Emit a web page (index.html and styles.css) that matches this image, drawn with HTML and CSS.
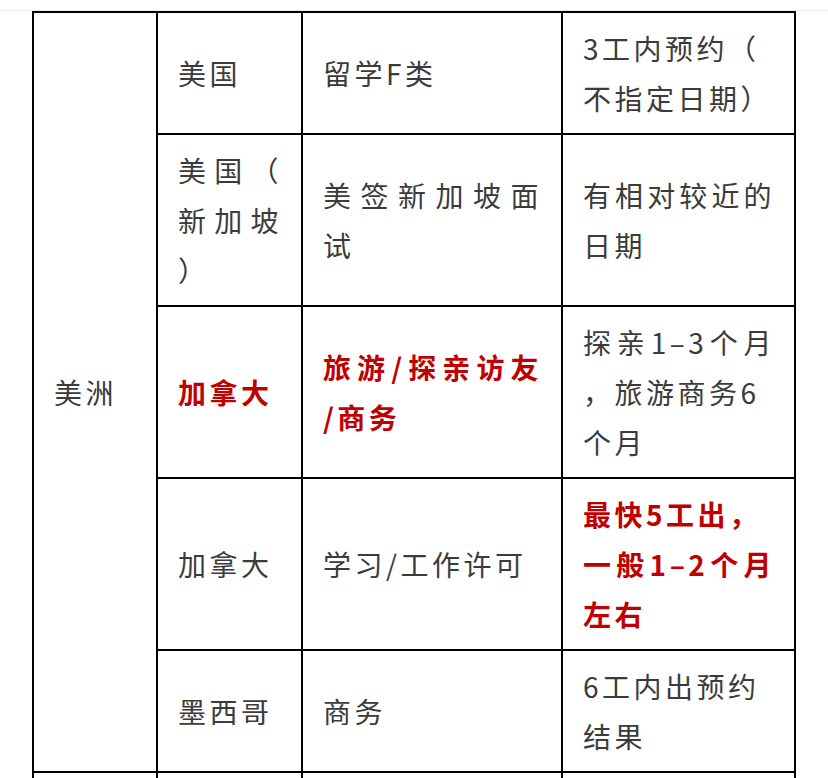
FILE: index.html
```html
<!DOCTYPE html>
<html lang="zh-CN">
<head>
<meta charset="utf-8">
<title>签证预约</title>
<link rel="stylesheet" href="styles.css">
</head>
<body>
<div class="page">
  <div class="rule"></div>
  <table class="visa">
    <colgroup>
      <col class="c1"><col class="c2"><col class="c3"><col class="c4">
    </colgroup>
    <tr class="r2">
      <td rowspan="5">美洲</td>
      <td>美国</td>
      <td>留学F类</td>
      <td><span class="ln">3工内预约（</span><span class="ln">不指定日期）</span></td>
    </tr>
    <tr class="r3">
      <td><span class="ln j">美国（</span><span class="ln j">新加坡</span><span class="ln">）</span></td>
      <td><span class="ln j">美签新加坡面</span><span class="ln">试</span></td>
      <td><span class="ln j">有相对较近的</span><span class="ln">日期</span></td>
    </tr>
    <tr class="r3">
      <td class="hl">加拿大</td>
      <td class="hl"><span class="ln j">旅游/探亲访友</span><span class="ln">/商务</span></td>
      <td><span class="ln j">探亲1–3个月</span><span class="ln">，旅游商务6</span><span class="ln">个月</span></td>
    </tr>
    <tr class="r3">
      <td>加拿大</td>
      <td>学习/工作许可</td>
      <td class="hl"><span class="ln">最快5工出，</span><span class="ln j">一般1–2个月</span><span class="ln">左右</span></td>
    </tr>
    <tr class="r2">
      <td>墨西哥</td>
      <td>商务</td>
      <td><span class="ln">6工内出预约</span><span class="ln">结果</span></td>
    </tr>
    <tr class="next">
      <td>&nbsp;</td><td>&nbsp;</td><td>&nbsp;</td><td>&nbsp;</td>
    </tr>
  </table>
</div>
</body>
</html>
```
FILE: styles.css
```css
html, body {
  margin: 0;
  padding: 0;
  background: #ffffff;
}

body {
  font-family: "Noto Sans CJK SC", "Noto Sans", sans-serif;
  color: #3b3b3b;
  overflow: hidden;
}

.page {
  padding-top: 10px;
}

.rule {
  border-top: 1px solid #ececec;
}

.visa {
  margin-left: 32px;
  width: 762px;
  border-collapse: collapse;
  table-layout: fixed;
  font-size: 28px;
  line-height: 50px;
  letter-spacing: 3.5px;
}

.c1 { width: 124px; }
.c2 { width: 145px; }
.c3 { width: 260px; }
.c4 { width: 233px; }

.visa td {
  border: 2px solid #000;
  padding: 10px 19px 10px 20px;
  vertical-align: middle;
  text-align: left;
  word-break: keep-all;
}

.ln {
  display: block;
}

.j {
  text-align: justify;
  text-align-last: justify;
}

.hl {
  color: #c00000;
  font-weight: 700;
}

.next td {
  height: 80px;
}
```
